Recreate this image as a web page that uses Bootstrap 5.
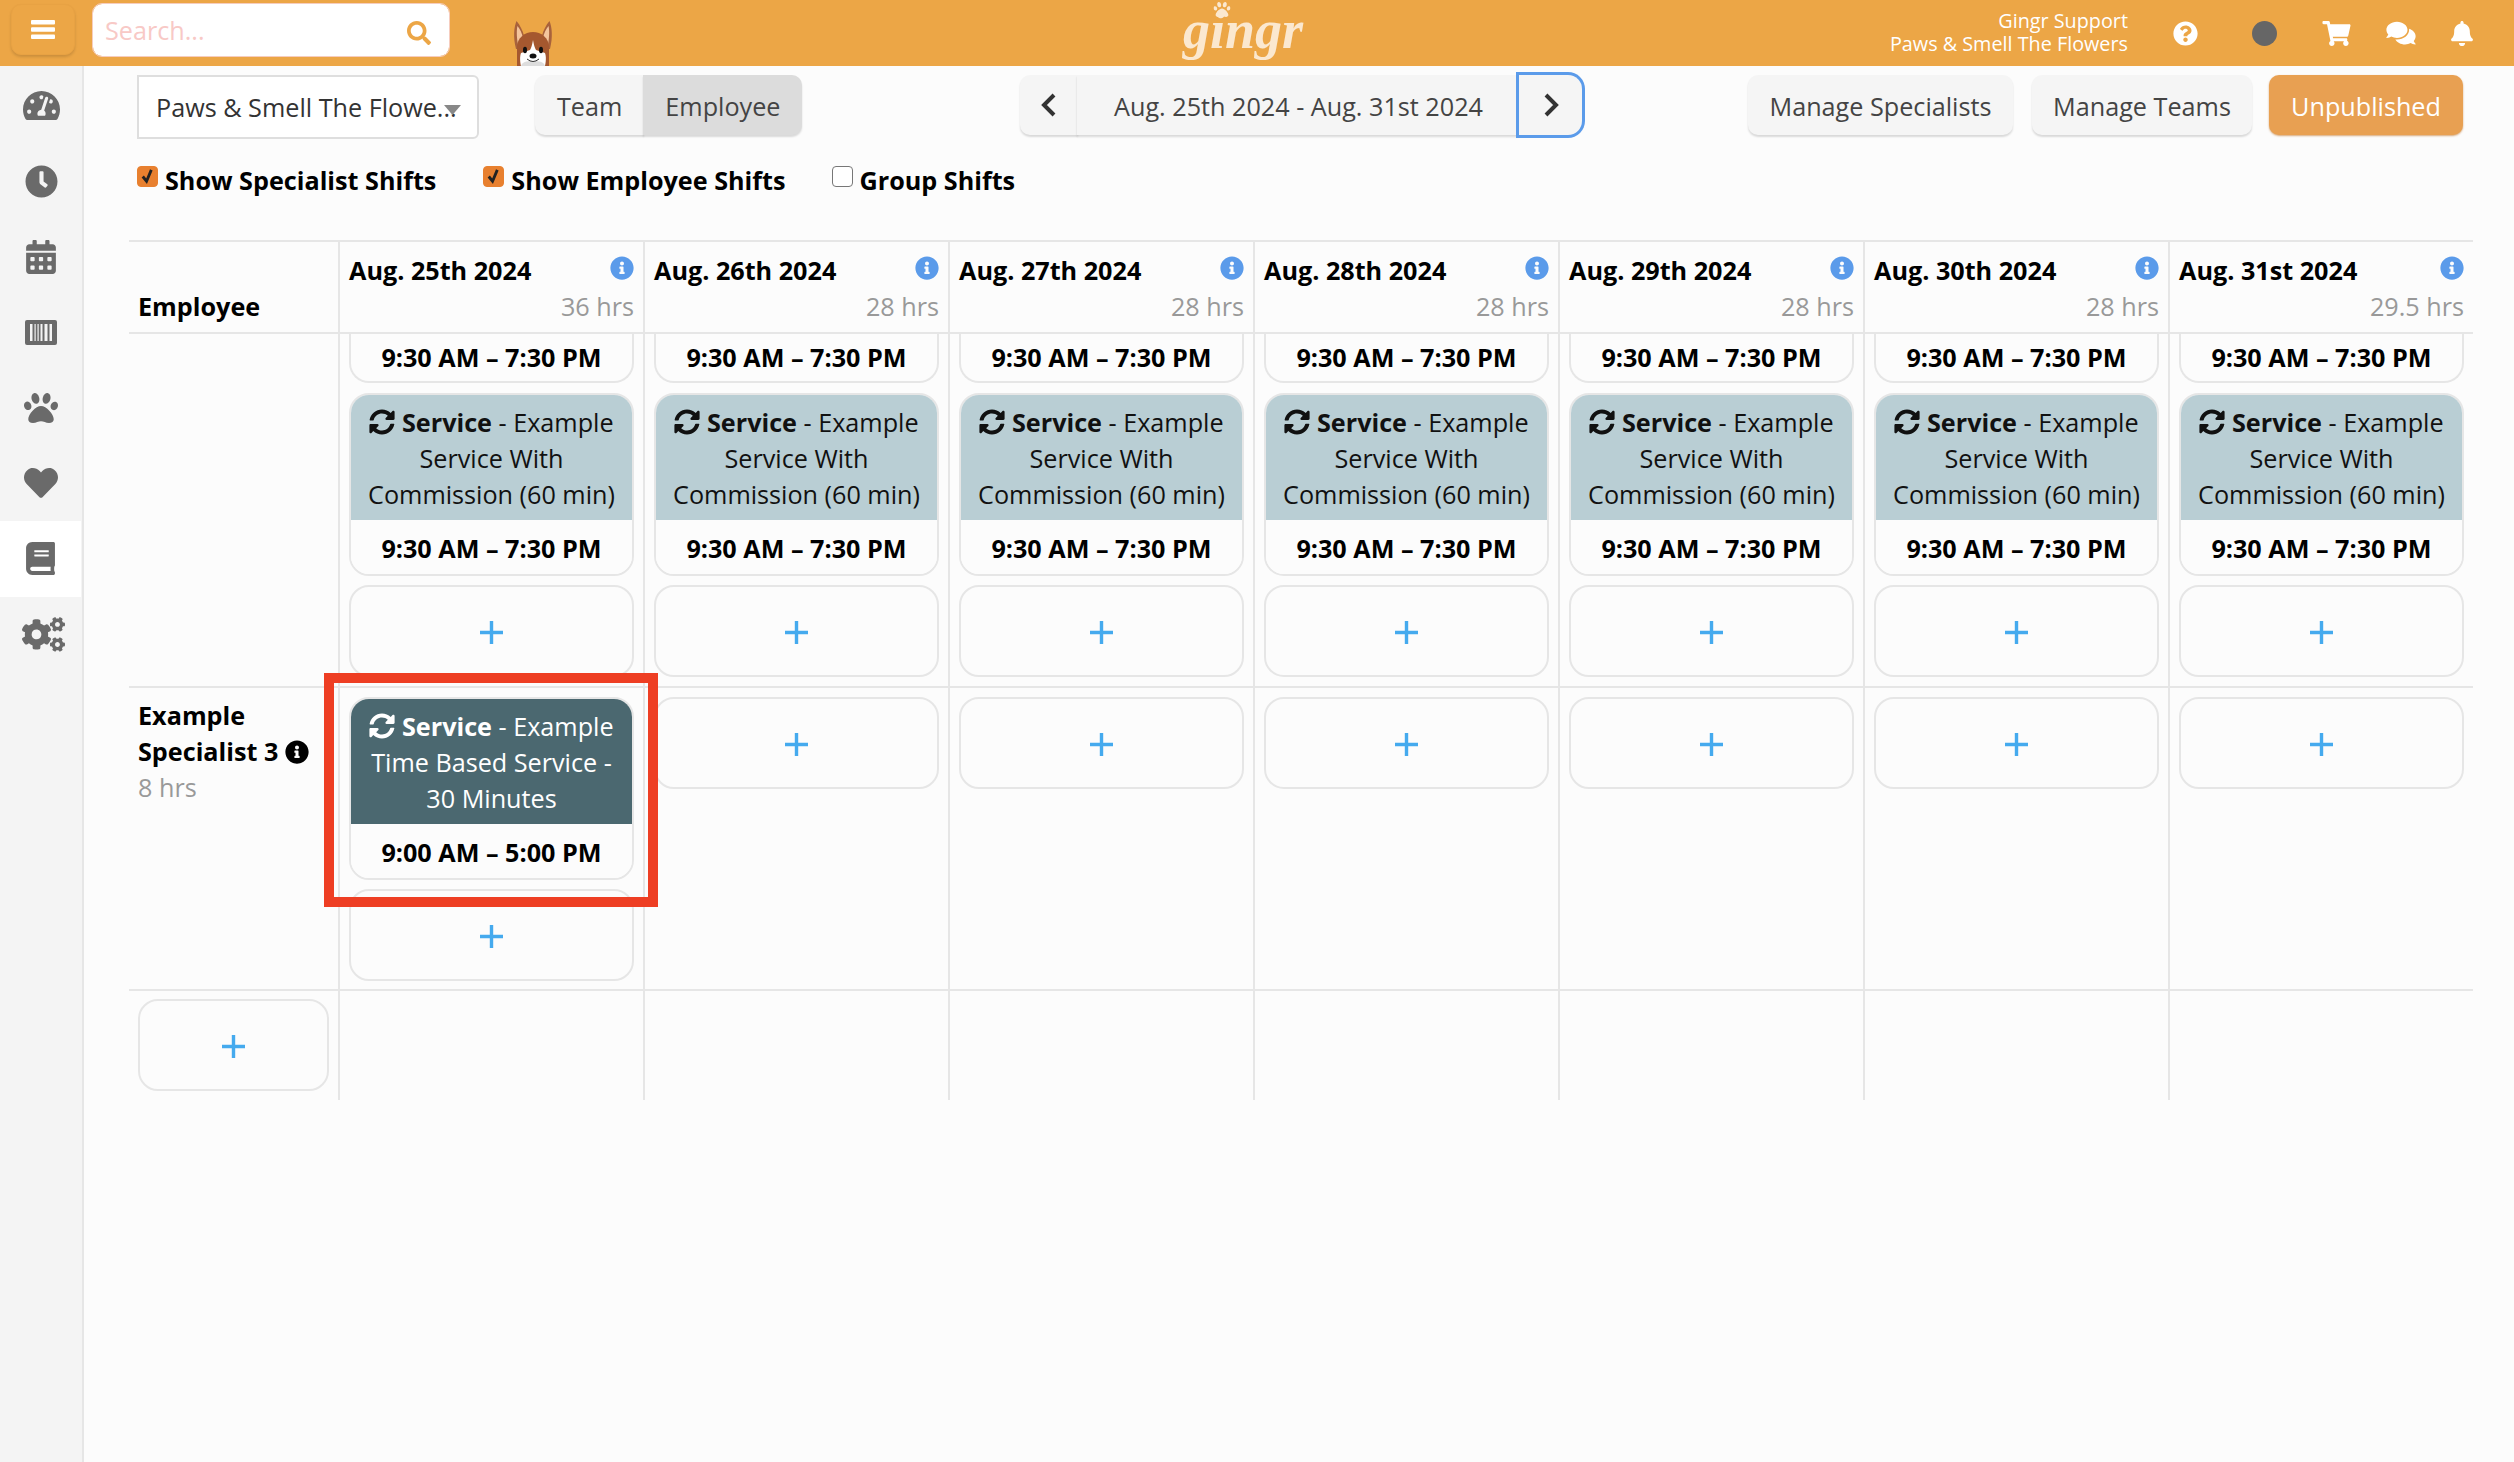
<!DOCTYPE html>
<html lang="en">
<head>
<meta charset="utf-8">
<title>Gingr Schedule</title>
<link href="https://cdn.jsdelivr.net/npm/bootstrap@5.3.0/dist/css/bootstrap.min.css" rel="stylesheet">
<style>
html,body{height:100%}
body{font-family:"Open Sans","Liberation Sans",sans-serif;font-size:25.2px;line-height:36px;background:#fcfcfc;color:#000;overflow:hidden}
.ico{fill:currentColor;display:block}
.ico-in{fill:currentColor;display:inline-block;vertical-align:-3px}
.topbar{height:66px;background:#eca646;padding:0 41px 0 11px;flex-wrap:nowrap;align-items:stretch;justify-content:flex-start}
.burger{width:64px;height:51px;margin-top:4px;border:1px solid #e8a243;border-radius:10px;background:#eca646;box-shadow:0 2px 3px rgba(0,0,0,.14);padding:0;color:#fff}
.burger svg{margin:auto}
.searchwrap{width:358px;height:54px;margin:3px 0 0 17px}
.searchwrap .form-control{height:54px;border:1px solid #f6cdbf;border-radius:10px;padding:0 12px;font-size:25.2px;box-shadow:none}
.searchwrap .form-control::placeholder{color:#f8c9c6;opacity:1}
.searchico{position:absolute;right:19px;top:18px;color:#eca646}
.dog{margin:21px 0 0 63px;align-self:flex-start}
.logo{margin:0 0 0 628px;width:122px;position:relative;color:#fbe8cf;flex:none}
.logo-word{font-family:"Liberation Serif",serif;font-weight:700;font-style:italic;font-size:54px;line-height:1;display:block;margin-top:3px;padding-left:2px;letter-spacing:0}
.logo-paw{position:absolute;left:32px;top:1px}
.who{font-size:19.8px;line-height:23px;color:#fff;text-align:right;margin-top:9px;white-space:nowrap}
.ticons{color:#fff;margin-left:45px;align-items:center}
.tgap-a{margin-left:54px}.tgap-b{margin-left:45px}.tgap-c{margin-left:35px}
.tdot{width:25px;height:25px;border-radius:50%;background:#666}
.sidebar{width:84px;background:#f4f4f4;border-right:2px solid #e6e6e6;padding-top:2px;flex:none;color:#6a6a6a}
.sideitem{height:75.5px;padding:0;color:#6a6a6a;display:flex;align-items:center;justify-content:center}
.sideitem.on{background:#fff;width:81px}
.sideitem .cogs{margin-left:4px}
.mainpane{padding:9px 41px 0 45px;min-width:0}
.toolrow{padding:0 10px 0 8px;align-items:flex-start}
.selbox{width:342px;height:64px;border:2px solid #dedede;border-radius:0 6px 6px 0;background:#fff;padding:0 17px;color:#333;white-space:nowrap;position:relative;overflow:hidden}
.selarrow{position:absolute;left:305px;top:28px}
.grybtn{background:#f5f5f5;color:#444;border:0;height:60px;font-size:25.2px;line-height:36px;padding:1px 22px 0;border-radius:10px;box-shadow:0 2px 2px rgba(0,0,0,.14)}
.grybtn:hover{background:#f5f5f5;color:#444}
.grybtn.picked,.grybtn.picked:hover{background:#dcdcdc;color:#444}
.teamgrp{margin-left:56px;width:266px}
.teamgrp .grybtn:first-child{flex:0 0 107px}
.teamgrp .grybtn:last-child{flex:0 0 159px}
.dategrp{margin-left:219px;width:564px}
.dategrp .grybtn:nth-child(1){flex:0 0 58px;padding:0;border-right:1px solid #eee}
.dategrp .grybtn:nth-child(2){flex:0 0 443px;padding:1px 0 0;color:#444;border-radius:0}
.dategrp .grybtn:nth-child(3){flex:0 0 63px;padding:0;box-shadow:0 0 0 3px #5b9bea;border-radius:0 14px 14px 0;margin-left:3px;position:relative;z-index:2}
.dategrp svg{margin:auto}
.btn-ms{width:265px;padding-left:0;padding-right:0}
.btn-mt{width:220px;padding-left:0;padding-right:0;margin-left:19px}
.btn-pub,.btn-pub:hover{background:#e8a052;color:#fff;height:60px;border:0;font-size:25.2px;line-height:36px;padding:1px 0 0;border-radius:10px;box-shadow:0 1px 2px rgba(190,110,30,.6);margin-left:17px;width:194px}
.checkrow{margin:23px 0 42px;padding-left:8px;font-weight:700;height:36px;align-items:center}
.chk{display:flex;align-items:center;margin:0}
.chk .form-check-input{width:21px;height:21px;margin:0 7px 8px 0;border:1.5px solid #777;border-radius:4px;background-color:#fff;box-shadow:none;flex:none}
.chk .form-check-input:checked{background-color:#e8802f;border-color:#e8802f;background-image:url("data:image/svg+xml,%3csvg xmlns='http://www.w3.org/2000/svg' viewBox='0 0 20 20'%3e%3cpath fill='none' stroke='%23222' stroke-width='3' d='M5 10l4 5 5-12'/%3e%3c/svg%3e")}
.chk-b{margin-left:47px}.chk-c{margin-left:46px}
.sched{table-layout:fixed;width:2344px;border-collapse:separate;border-spacing:0;margin:0}
.sched th,.sched td{vertical-align:top;padding:0 9px;border-left:2px solid #e6e6e6;border-bottom:2px solid #e6e6e6;background:transparent}
.sched th:first-child,.sched td:first-child{border-left:0}
.sched thead th{border-top:2px solid #e6e6e6;height:94px;padding-top:10px}
.sched thead th:first-child{vertical-align:bottom;padding-bottom:8px}
.sched tbody tr:last-child td{border-bottom:0;height:109px}
.sched tbody tr:nth-child(1) td{height:354px}
.sched tbody tr:nth-child(2) td{height:303px;padding-top:9px}
.sched tbody tr:nth-child(3) td{padding-top:8px}
.cnr{position:relative}
.infoblue{color:#5b9bea}
.hrs{color:#999;font-weight:400;text-align:right}
.hrs-left{text-align:left}
.shift{border:2px solid #e6e6e6;border-radius:20px;overflow:hidden;background:#fcfcfc;margin-bottom:9px;text-align:center;--bs-card-bg:#fcfcfc}
.shift.cutoff{border-top:0;border-radius:0 0 20px 20px;height:49px;padding-top:5px;font-weight:700;margin-bottom:10px}
.shift-top{padding:9px 10px 8px;background:#b9ced4;color:#111;border:0;flex:none}
.shift-top.dark{background:#4b6870;color:#fff}
.shift-foot{padding:10px 0 8px;background:#fcfcfc;border:0;font-weight:700;border-radius:0}
.addbox{height:92px;border:2px solid #e6e6e6;border-radius:20px;display:flex;align-items:center;justify-content:center;color:#45aaee;background:transparent;margin:0;padding:0}
.addbox svg{margin-top:3px}
.redmark{position:absolute;left:-16px;top:-15px;width:334px;height:234px;border:10px solid #ee3e23;z-index:5;pointer-events:none}
</style>
</head>
<body class="d-flex flex-column">
<svg width="0" height="0" class="position-absolute">
<defs>
<symbol id="i-sync" viewBox="0 0 512 512"><path d="M370.72 133.28C339.458 104.008 298.888 87.962 255.848 88c-77.458.068-144.328 53.178-162.791 126.85-1.344 5.363-6.122 9.15-11.651 9.15H24.103c-7.498 0-13.194-6.807-11.807-14.176C33.933 94.924 134.813 8 256 8c66.448 0 126.791 26.136 171.315 68.685L463.03 40.97C478.149 25.851 504 36.559 504 57.941V192c0 13.255-10.745 24-24 24H345.941c-21.382 0-32.09-25.851-16.971-40.971l41.75-41.749zM32 296h134.059c21.382 0 32.09 25.851 16.971 40.971l-41.75 41.75c31.262 29.273 71.835 45.319 114.876 45.28 77.418-.07 144.315-53.144 162.787-126.849 1.344-5.363 6.122-9.15 11.651-9.15h57.304c7.498 0 13.194 6.807 11.807 14.176C478.067 417.076 377.187 504 256 504c-66.448 0-126.791-26.136-171.315-68.685L48.97 471.03C33.851 486.149 8 475.441 8 454.059V320c0-13.255 10.745-24 24-24z"/></symbol>
<symbol id="i-info" viewBox="0 0 512 512"><path d="M256 8C119.043 8 8 119.083 8 256c0 136.997 111.043 248 248 248s248-111.003 248-248C504 119.083 392.957 8 256 8zm0 110c23.196 0 42 18.804 42 42s-18.804 42-42 42-42-18.804-42-42 18.804-42 42-42zm56 254c0 6.627-5.373 12-12 12h-88c-6.627 0-12-5.373-12-12v-24c0-6.627 5.373-12 12-12h12v-64h-12c-6.627 0-12-5.373-12-12v-24c0-6.627 5.373-12 12-12h64c6.627 0 12 5.373 12 12v100h12c6.627 0 12 5.373 12 12v24z"/></symbol>
<symbol id="i-paw" viewBox="0 0 512 512"><path d="M256 224c-79.41 0-192 122.76-192 200.25 0 34.9 26.81 55.75 71.74 55.75 48.84 0 81.09-25.08 120.26-25.08 39.51 0 71.85 25.08 120.26 25.08 44.93 0 71.74-20.85 71.74-55.75C448 346.76 335.41 224 256 224zm-147.28-12.61c-10.4-34.65-42.44-57.09-71.56-50.13-29.12 6.96-44.29 40.69-33.89 75.34 10.4 34.65 42.44 57.09 71.56 50.13 29.12-6.96 44.29-40.69 33.89-75.34zm84.72-20.78c30.94-8.14 46.42-49.94 34.58-93.36s-46.52-72.01-77.46-63.87-46.42 49.94-34.58 93.36c11.84 43.42 46.52 72.02 77.46 63.87zm281.39-29.34c-29.12-6.96-61.15 15.48-71.56 50.13-10.4 34.65 4.77 68.38 33.89 75.34 29.12 6.96 61.15-15.48 71.56-50.13 10.4-34.65-4.77-68.38-33.89-75.34zm-156.27 29.34c30.94 8.14 65.62-20.45 77.46-63.87 11.84-43.42-3.64-85.21-34.58-93.36s-65.62 20.45-77.46 63.87c-11.84 43.42 3.64 85.22 34.58 93.36z"/></symbol>
<symbol id="i-plus" viewBox="0 0 23 23"><path d="M11.5 0v23M0 11.5h23" fill="none" stroke="currentColor" stroke-width="3.4"/></symbol>
</defs>
</svg>

<nav class="navbar topbar d-flex">
  <button class="burger d-flex" type="button" aria-label="Menu">
    <svg width="24" height="19" viewBox="0 0 24 19" class="ico"><rect width="24" height="4.5" rx="1"/><rect y="7.2" width="24" height="4.5" rx="1"/><rect y="14.4" width="24" height="4.5" rx="1"/></svg>
  </button>
  <div class="searchwrap position-relative">
    <input class="form-control" type="text" placeholder="Search...">
    <svg class="ico searchico" width="24" height="24" viewBox="0 0 512 512"><path d="M505 442.7L405.3 343c-4.5-4.5-10.6-7-17-7H372c27.6-35.3 44-79.7 44-128C416 93.1 322.9 0 208 0S0 93.1 0 208s93.1 208 208 208c48.3 0 92.7-16.4 128-44v16.3c0 6.4 2.5 12.5 7 17l99.7 99.7c9.4 9.4 24.6 9.4 33.9 0l28.3-28.3c9.4-9.4 9.4-24.6.1-34zM208 336c-70.7 0-128-57.2-128-128 0-70.7 57.2-128 128-128 70.7 0 128 57.2 128 128 0 70.7-57.2 128-128 128z"/></svg>
  </div>
  <svg class="dog" width="40" height="45" viewBox="0 0 40 45">
    <path d="M3 28C0 16 1 6 3.500 0 7 4 10 10 11 15L29 15C30 10 33 4 36.500 0 39 6 40 16 37 28Z" fill="#a8623c"/>
    <path d="M5 24C3.500 15 3.500 9 4.500 5 7 8 9 12 10 17ZM35 24C36.500 15 36.500 9 35.500 5 33 8 31 12 30 17Z" fill="#f4c59c"/>
    <path d="M4 45V26C4 17 12 11 20 11S36 17 36 26V45Z" fill="#a5582f"/>
    <path d="M20 19C21 25 22 27 23 29L32 32C34 37 32 45 32 45H8S6 37 8 32L17 29C18 27 19 25 20 19Z" fill="#fff"/>
    <path d="M8 45C9 41 13 40 20 40S31 41 32 45Z" fill="#ddd"/>
    <ellipse cx="12" cy="29" rx="2" ry="3.200" fill="#111"/><ellipse cx="28" cy="29" rx="2" ry="3.200" fill="#111"/>
    <ellipse cx="20" cy="35" rx="3.500" ry="2.500" fill="#111"/>
    <path d="M14 38Q20 43 26 38" stroke="#333" stroke-width="1" fill="none"/>
  </svg>
  <div class="logo">
    <svg class="ico logo-paw" width="18" height="17" viewBox="0 0 512 512"><use href="#i-paw"/></svg>
    <span class="logo-word">gingr</span>
  </div>
  <div class="who ms-auto">Gingr Support<br>Paws &amp; Smell The Flowers</div>
  <div class="d-flex ticons">
    <svg class="ico" width="25" height="25" viewBox="0 0 512 512"><path d="M504 256c0 136.997-111.043 248-248 248S8 392.997 8 256C8 119.083 119.043 8 256 8s248 111.083 248 248zM262.655 90c-54.497 0-89.255 22.957-116.549 63.758-3.536 5.286-2.353 12.415 2.715 16.258l34.699 26.31c5.205 3.947 12.621 3.008 16.665-2.122 17.864-22.658 30.113-35.797 57.303-35.797 20.429 0 45.698 13.148 45.698 32.958 0 14.976-12.363 22.667-32.534 33.976C247.128 238.528 216 254.941 216 296v4c0 6.627 5.373 12 12 12h56c6.627 0 12-5.373 12-12v-1.333c0-28.462 83.186-29.647 83.186-106.667 0-58.002-60.165-102-116.531-102zM256 338c-25.365 0-46 20.635-46 46 0 25.364 20.635 46 46 46s46-20.636 46-46c0-25.365-20.635-46-46-46z"/></svg>
    <div class="tdot tgap-a"></div>
    <svg class="ico tgap-b" width="29" height="25" viewBox="0 0 576 512"><path d="M528.12 301.319l47.273-208C578.806 78.301 567.391 64 551.99 64H159.208l-9.166-44.81C147.758 8.021 137.93 0 126.529 0H24C10.745 0 0 10.745 0 24v16c0 13.255 10.745 24 24 24h69.883l70.248 343.435C147.325 417.1 136 435.222 136 456c0 30.928 25.072 56 56 56s56-25.072 56-56c0-15.674-6.447-29.835-16.824-40h209.647C430.447 426.165 424 440.326 424 456c0 30.928 25.072 56 56 56s56-25.072 56-56c0-22.172-12.888-41.332-31.579-50.405l5.517-24.276c3.413-15.018-8.002-29.319-23.403-29.319H218.117l-6.545-32h293.145c11.206 0 20.92-7.754 23.403-18.681z"/></svg>
    <svg class="ico tgap-c" width="30" height="26" viewBox="0 0 576 512"><path d="M416 192c0-88.400-93.100-160-208-160S0 103.600 0 192c0 34.300 14.100 65.900 38 92-13.400 30.200-35.500 54.200-35.800 54.500-2.200 2.300-2.800 5.700-1.500 8.700S4.800 352 8 352c36.600 0 66.900-12.300 88.700-25 32.200 15.700 70.300 25 111.300 25 114.900 0 208-71.600 208-160zm122 220c23.900-26 38-57.700 38-92 0-66.900-53.500-124.200-129.300-148.100.9 6.600 1.300 13.300 1.300 20.100 0 105.900-107.700 192-240 192-10.800 0-21.300-.8-31.700-1.900C207.800 439.600 281.800 480 368 480c41 0 79.100-9.200 111.300-25 21.800 12.700 52.100 25 88.700 25 3.200 0 6.100-1.900 7.300-4.800 1.300-2.900.7-6.300-1.500-8.700-.3-.3-22.400-24.200-35.800-54.500z"/></svg>
    <svg class="ico tgap-c" width="22" height="25" viewBox="0 0 448 512"><path d="M224 512c35.320 0 63.970-28.650 63.970-64H160.030c0 35.350 28.650 64 63.970 64zm215.390-149.710c-19.320-20.760-55.470-51.990-55.470-154.290 0-77.700-54.480-139.900-127.940-155.160V32c0-17.670-14.320-32-31.980-32s-31.980 14.330-31.980 32v20.840C118.560 68.100 64.080 130.300 64.080 208c0 102.300-36.150 133.530-55.470 154.290-6 6.450-8.660 14.160-8.610 21.710.11 16.400 12.980 32 32.100 32h383.800c19.120 0 32-15.600 32.100-32 .05-7.550-2.610-15.270-8.610-21.710z"/></svg>
  </div>
</nav>

<div class="d-flex flex-grow-1" style="min-height:0">
  <aside class="sidebar nav flex-column flex-nowrap">
    <a class="sideitem nav-link" href="#" aria-label="Dashboard"><svg class="ico" width="37" height="33" viewBox="0 0 576 512"><path d="M288 32C128.940 32 0 160.940 0 320c0 52.800 14.250 102.260 39.060 144.800 5.610 9.620 16.300 15.200 27.440 15.200h443c11.140 0 21.830-5.580 27.440-15.200C561.750 422.260 576 372.800 576 320c0-159.060-128.940-288-288-288zm0 64c14.710 0 26.580 10.130 30.320 23.650-1.110 2.260-2.640 4.230-3.450 6.670l-9.220 27.670c-5.130 3.490-10.970 6.010-17.640 6.010-17.670 0-32-14.330-32-32S270.330 96 288 96zM96 384c-17.670 0-32-14.330-32-32s14.330-32 32-32 32 14.330 32 32-14.330 32-32 32zm48-160c-17.670 0-32-14.330-32-32s14.330-32 32-32 32 14.330 32 32-14.330 32-32 32zm246.770-72.410l-61.330 184C343.130 347.330 352 364.540 352 384c0 11.720-3.380 22.550-8.880 32H232.880c-5.500-9.450-8.880-20.280-8.880-32 0-33.940 26.500-61.430 59.900-63.590l61.340-184.010c4.170-12.560 17.730-19.450 30.360-15.170 12.570 4.190 19.350 17.790 15.170 30.360zm14.660 57.200l15.520-46.550c3.470-1.290 7.130-2.230 11.050-2.230 17.670 0 32 14.330 32 32s-14.330 32-32 32c-11.380-.01-20.890-6.280-26.570-15.220zM480 384c-17.670 0-32-14.330-32-32s14.330-32 32-32 32 14.330 32 32-14.330 32-32 32z"/></svg></a>
    <a class="sideitem nav-link" href="#" aria-label="Clock"><svg class="ico" width="33" height="33" viewBox="0 0 512 512"><path d="M256,8C119,8,8,119,8,256S119,504,256,504,504,393,504,256,393,8,256,8Zm92.490,313h0l-20,25a16,16,0,0,1-22.490,2.500h0l-67-49.720a40,40,0,0,1-15-31.230V112a16,16,0,0,1,16-16h32a16,16,0,0,1,16,16V256l58,42.500A16,16,0,0,1,348.490,321Z"/></svg></a>
    <a class="sideitem nav-link" href="#" aria-label="Calendar"><svg class="ico" width="30" height="34" viewBox="0 0 448 512"><path d="M0 464c0 26.500 21.500 48 48 48h352c26.500 0 48-21.500 48-48V192H0v272zm320-196c0-6.600 5.400-12 12-12h40c6.600 0 12 5.400 12 12v40c0 6.600-5.400 12-12 12h-40c-6.600 0-12-5.400-12-12v-40zm0 128c0-6.600 5.400-12 12-12h40c6.600 0 12 5.400 12 12v40c0 6.600-5.400 12-12 12h-40c-6.600 0-12-5.400-12-12v-40zM192 268c0-6.600 5.400-12 12-12h40c6.600 0 12 5.400 12 12v40c0 6.600-5.400 12-12 12h-40c-6.600 0-12-5.400-12-12v-40zm0 128c0-6.600 5.400-12 12-12h40c6.600 0 12 5.400 12 12v40c0 6.600-5.400 12-12 12h-40c-6.600 0-12-5.400-12-12v-40zM64 268c0-6.600 5.400-12 12-12h40c6.600 0 12 5.400 12 12v40c0 6.600-5.400 12-12 12H76c-6.600 0-12-5.400-12-12v-40zm0 128c0-6.600 5.400-12 12-12h40c6.600 0 12 5.400 12 12v40c0 6.600-5.400 12-12 12H76c-6.600 0-12-5.400-12-12v-40zM400 64h-48V16c0-8.800-7.200-16-16-16h-32c-8.800 0-16 7.200-16 16v48H160V16c0-8.800-7.200-16-16-16h-32c-8.800 0-16 7.200-16 16v48H48C21.500 64 0 85.500 0 112v48h448v-48c0-26.500-21.500-48-48-48z"/></svg></a>
    <a class="sideitem nav-link" href="#" aria-label="Barcode"><svg class="ico" width="32" height="25" viewBox="0 0 32 25"><path fill-rule="evenodd" d="M2 0h28a2 2 0 0 1 2 2v21a2 2 0 0 1-2 2H2a2 2 0 0 1-2-2V2a2 2 0 0 1 2-2zM5 4v17h2.500V4zM9.500 4v17h1.200V4zM12.500 4v17h1.200V4zM15.500 4v17h2V4zM19.500 4v17h3V4zM24.500 4v17h2.500V4z"/></svg></a>
    <a class="sideitem nav-link" href="#" aria-label="Pets"><svg class="ico" width="34" height="34" viewBox="0 0 512 512"><use href="#i-paw"/></svg></a>
    <a class="sideitem nav-link" href="#" aria-label="Favorites"><svg class="ico" width="34" height="34" viewBox="0 0 512 512"><path d="M462.300 62.600C407.500 15.900 326 24.300 275.700 76.200L256 96.500l-19.700-20.300C186.100 24.300 104.500 15.900 49.700 62.600c-62.800 53.600-66.100 149.800-9.900 207.900l193.500 199.800c12.500 12.900 32.800 12.900 45.300 0l193.500-199.800c56.300-58.100 53-154.300-9.800-207.900z"/></svg></a>
    <a class="sideitem nav-link on" href="#" aria-label="Book"><svg class="ico" width="29" height="33" viewBox="0 0 448 512"><path d="M448 360V24c0-13.300-10.700-24-24-24H96C43 0 0 43 0 96v320c0 53 43 96 96 96h328c13.300 0 24-10.700 24-24v-16c0-7.500-3.500-14.300-8.900-18.700-4.200-15.400-4.200-59.300 0-74.700 5.400-4.300 8.900-11.100 8.900-18.600zM128 134c0-3.300 2.700-6 6-6h212c3.300 0 6 2.700 6 6v20c0 3.300-2.700 6-6 6H134c-3.300 0-6-2.700-6-6v-20zm0 64c0-3.300 2.700-6 6-6h212c3.300 0 6 2.700 6 6v20c0 3.300-2.700 6-6 6H134c-3.300 0-6-2.700-6-6v-20zm253.400 250H96c-17.700 0-32-14.300-32-32 0-17.600 14.400-32 32-32h285.400c-1.900 17.100-1.900 46.900 0 64z"/></svg></a>
    <a class="sideitem nav-link" href="#" aria-label="Settings"><svg class="ico cogs" width="43" height="35" viewBox="0 0 640 512"><path d="M512.100 191l-8.200 14.300c-3 5.300-9.400 7.500-15.100 5.400-11.800-4.400-22.600-10.700-32.100-18.600-4.600-3.800-5.800-10.500-2.800-15.700l8.200-14.300c-6.900-8-12.300-17.300-15.900-27.400h-16.500c-6 0-11.200-4.300-12.200-10.300-2-12-2.100-24.600 0-37.100 1-6 6.200-10.400 12.200-10.400h16.500c3.600-10.100 9-19.400 15.900-27.400l-8.200-14.300c-3-5.200-1.900-11.900 2.800-15.700 9.500-7.900 20.400-14.200 32.100-18.600 5.700-2.100 12.100.1 15.100 5.400l8.200 14.300c10.500-1.900 21.200-1.900 31.700 0L552 6.300c3-5.300 9.400-7.500 15.100-5.400 11.800 4.400 22.600 10.700 32.100 18.600 4.600 3.800 5.800 10.500 2.800 15.700l-8.200 14.300c6.900 8 12.300 17.300 15.900 27.400h16.500c6 0 11.200 4.300 12.200 10.300 2 12 2.100 24.600 0 37.100-1 6-6.200 10.400-12.200 10.400h-16.500c-3.600 10.100-9 19.400-15.900 27.400l8.200 14.300c3 5.200 1.900 11.900-2.800 15.700-9.500 7.900-20.400 14.200-32.100 18.600-5.700 2.100-12.100-.1-15.100-5.400l-8.200-14.300c-10.400 1.900-21.200 1.900-31.700 0zm-10.500-58.800c38.500 29.600 82.400-14.300 52.800-52.800-38.500-29.700-82.400 14.300-52.800 52.800zM386.300 286.100l33.700 16.800c10.100 5.800 14.500 18.100 10.500 29.100-8.900 24.200-26.400 46.400-42.600 65.800-7.400 8.900-20.200 11.100-30.300 5.300l-29.100-16.800c-16 13.700-34.600 24.600-54.900 31.700v33.600c0 11.600-8.300 21.600-19.700 23.600-24.600 4.200-50.400 4.400-75.900 0-11.500-2-20-11.900-20-23.600V418c-20.300-7.200-38.900-18-54.900-31.700L74 403c-10 5.800-22.900 3.600-30.300-5.300-16.200-19.400-33.300-41.600-42.200-65.700-4-10.900.4-23.200 10.500-29.100l33.300-16.800c-3.900-20.900-3.900-42.400 0-63.400L12 205.800c-10.100-5.800-14.600-18.100-10.500-29 8.900-24.200 26-46.400 42.200-65.800 7.400-8.900 20.200-11.100 30.300-5.300l29.100 16.800c16-13.700 34.600-24.600 54.900-31.700V57.100c0-11.500 8.200-21.500 19.600-23.500 24.600-4.200 50.500-4.400 76-.1 11.500 2 20 11.900 20 23.600v33.600c20.300 7.200 38.900 18 54.900 31.700l29.100-16.800c10-5.800 22.900-3.600 30.300 5.300 16.200 19.400 33.200 41.600 42.100 65.800 4 10.900.1 23.200-10 29.100l-33.700 16.800c3.900 21 3.900 42.500 0 63.500zm-117.600 21.100c59.200-77-28.700-164.900-105.700-105.700-59.200 77 28.700 164.900 105.700 105.700zm243.400 182.700l-8.200 14.300c-3 5.300-9.400 7.500-15.100 5.400-11.800-4.400-22.600-10.700-32.100-18.600-4.600-3.800-5.800-10.500-2.800-15.700l8.200-14.300c-6.900-8-12.300-17.300-15.900-27.400h-16.500c-6 0-11.200-4.300-12.200-10.300-2-12-2.100-24.600 0-37.100 1-6 6.200-10.400 12.200-10.400h16.500c3.600-10.100 9-19.400 15.900-27.400l-8.200-14.300c-3-5.200-1.900-11.900 2.800-15.700 9.500-7.900 20.400-14.200 32.100-18.600 5.700-2.100 12.100.1 15.100 5.400l8.200 14.300c10.500-1.900 21.200-1.900 31.700 0l8.200-14.300c3-5.300 9.400-7.500 15.100-5.400 11.800 4.400 22.600 10.700 32.100 18.600 4.600 3.800 5.800 10.500 2.800 15.700l-8.200 14.300c6.900 8 12.300 17.300 15.900 27.400h16.500c6 0 11.200 4.300 12.200 10.300 2 12 2.100 24.600 0 37.100-1 6-6.200 10.400-12.200 10.400h-16.500c-3.600 10.100-9 19.400-15.900 27.400l8.200 14.300c3 5.200 1.900 11.900-2.800 15.700-9.500 7.900-20.400 14.200-32.100 18.600-5.700 2.100-12.100-.1-15.100-5.400l-8.200-14.300c-10.400 1.900-21.200 1.900-31.700 0zM501.600 431c38.500 29.600 82.400-14.300 52.800-52.800-38.500-29.600-82.400 14.300-52.800 52.800z"/></svg></a>
  </aside>

  <main class="mainpane flex-grow-1">
    <div class="d-flex toolrow">
      <div class="selbox d-flex align-items-center">Paws &amp; Smell The Flowe...<svg class="selarrow" width="17" height="10" viewBox="0 0 17 10"><path d="M0 0h17L8.500 10z" fill="#888"/></svg></div>
      <div class="btn-group teamgrp" role="group">
        <button class="btn grybtn" type="button">Team</button>
        <button class="btn grybtn picked" type="button">Employee</button>
      </div>
      <div class="btn-group dategrp" role="group">
        <button class="btn grybtn d-flex" type="button" aria-label="Previous week"><svg width="16" height="24" viewBox="0 0 16 24"><path d="M13 2L3 12l10 10" fill="none" stroke="#333" stroke-width="4"/></svg></button>
        <button class="btn grybtn" type="button">Aug. 25th 2024 - Aug. 31st 2024</button>
        <button class="btn grybtn d-flex" type="button" aria-label="Next week"><svg width="16" height="24" viewBox="0 0 16 24"><path d="M3 2l10 10L3 22" fill="none" stroke="#333" stroke-width="4"/></svg></button>
      </div>
      <div class="ms-auto d-flex">
        <button class="btn grybtn btn-ms" type="button">Manage Specialists</button>
        <button class="btn grybtn btn-mt" type="button">Manage Teams</button>
        <button class="btn btn-pub" type="button">Unpublished</button>
      </div>
    </div>

    <div class="d-flex checkrow">
      <label class="chk"><input class="form-check-input" type="checkbox" checked>Show Specialist Shifts</label>
      <label class="chk chk-b"><input class="form-check-input" type="checkbox" checked>Show Employee Shifts</label>
      <label class="chk chk-c"><input class="form-check-input" type="checkbox">Group Shifts</label>
    </div>

    <table class="sched">
      <colgroup><col style="width:209px"><col span="7" style="width:305px"></colgroup>
      <thead>
        <tr>
          <th>Employee</th>
          <th><div class="d-flex justify-content-between"><span>Aug. 25th 2024</span><svg class="ico infoblue mt-1" width="24" height="24"><use href="#i-info"/></svg></div><div class="hrs">36 hrs</div></th>
          <th><div class="d-flex justify-content-between"><span>Aug. 26th 2024</span><svg class="ico infoblue mt-1" width="24" height="24"><use href="#i-info"/></svg></div><div class="hrs">28 hrs</div></th>
          <th><div class="d-flex justify-content-between"><span>Aug. 27th 2024</span><svg class="ico infoblue mt-1" width="24" height="24"><use href="#i-info"/></svg></div><div class="hrs">28 hrs</div></th>
          <th><div class="d-flex justify-content-between"><span>Aug. 28th 2024</span><svg class="ico infoblue mt-1" width="24" height="24"><use href="#i-info"/></svg></div><div class="hrs">28 hrs</div></th>
          <th><div class="d-flex justify-content-between"><span>Aug. 29th 2024</span><svg class="ico infoblue mt-1" width="24" height="24"><use href="#i-info"/></svg></div><div class="hrs">28 hrs</div></th>
          <th><div class="d-flex justify-content-between"><span>Aug. 30th 2024</span><svg class="ico infoblue mt-1" width="24" height="24"><use href="#i-info"/></svg></div><div class="hrs">28 hrs</div></th>
          <th><div class="d-flex justify-content-between"><span>Aug. 31st 2024</span><svg class="ico infoblue mt-1" width="24" height="24"><use href="#i-info"/></svg></div><div class="hrs">29.5 hrs</div></th>
        </tr>
      </thead>
      <tbody>
        <tr>
          <td></td>
          <td><div class="shift cutoff">9:30 AM – 7:30 PM</div><div class="card shift"><div class="card-body shift-top"><svg class="ico-in" width="26" height="26"><use href="#i-sync"/></svg> <b>Service</b> - Example<br>Service With<br>Commission (60 min)</div><div class="card-footer shift-foot">9:30 AM – 7:30 PM</div></div><div class="addbox"><svg width="23" height="23"><use href="#i-plus"/></svg></div></td>
          <td><div class="shift cutoff">9:30 AM – 7:30 PM</div><div class="card shift"><div class="card-body shift-top"><svg class="ico-in" width="26" height="26"><use href="#i-sync"/></svg> <b>Service</b> - Example<br>Service With<br>Commission (60 min)</div><div class="card-footer shift-foot">9:30 AM – 7:30 PM</div></div><div class="addbox"><svg width="23" height="23"><use href="#i-plus"/></svg></div></td>
          <td><div class="shift cutoff">9:30 AM – 7:30 PM</div><div class="card shift"><div class="card-body shift-top"><svg class="ico-in" width="26" height="26"><use href="#i-sync"/></svg> <b>Service</b> - Example<br>Service With<br>Commission (60 min)</div><div class="card-footer shift-foot">9:30 AM – 7:30 PM</div></div><div class="addbox"><svg width="23" height="23"><use href="#i-plus"/></svg></div></td>
          <td><div class="shift cutoff">9:30 AM – 7:30 PM</div><div class="card shift"><div class="card-body shift-top"><svg class="ico-in" width="26" height="26"><use href="#i-sync"/></svg> <b>Service</b> - Example<br>Service With<br>Commission (60 min)</div><div class="card-footer shift-foot">9:30 AM – 7:30 PM</div></div><div class="addbox"><svg width="23" height="23"><use href="#i-plus"/></svg></div></td>
          <td><div class="shift cutoff">9:30 AM – 7:30 PM</div><div class="card shift"><div class="card-body shift-top"><svg class="ico-in" width="26" height="26"><use href="#i-sync"/></svg> <b>Service</b> - Example<br>Service With<br>Commission (60 min)</div><div class="card-footer shift-foot">9:30 AM – 7:30 PM</div></div><div class="addbox"><svg width="23" height="23"><use href="#i-plus"/></svg></div></td>
          <td><div class="shift cutoff">9:30 AM – 7:30 PM</div><div class="card shift"><div class="card-body shift-top"><svg class="ico-in" width="26" height="26"><use href="#i-sync"/></svg> <b>Service</b> - Example<br>Service With<br>Commission (60 min)</div><div class="card-footer shift-foot">9:30 AM – 7:30 PM</div></div><div class="addbox"><svg width="23" height="23"><use href="#i-plus"/></svg></div></td>
          <td><div class="shift cutoff">9:30 AM – 7:30 PM</div><div class="card shift"><div class="card-body shift-top"><svg class="ico-in" width="26" height="26"><use href="#i-sync"/></svg> <b>Service</b> - Example<br>Service With<br>Commission (60 min)</div><div class="card-footer shift-foot">9:30 AM – 7:30 PM</div></div><div class="addbox"><svg width="23" height="23"><use href="#i-plus"/></svg></div></td>
        </tr>
        <tr>
          <td><b>Example<br>Specialist 3 <svg class="ico-in" width="24" height="24"><use href="#i-info"/></svg></b><div class="hrs hrs-left">8 hrs</div></td>
          <td class="cnr"><div class="redmark"></div><div class="card shift"><div class="card-body shift-top dark"><svg class="ico-in" width="26" height="26"><use href="#i-sync"/></svg> <b>Service</b> - Example<br>Time Based Service -<br>30 Minutes</div><div class="card-footer shift-foot">9:00 AM – 5:00 PM</div></div><div class="addbox"><svg width="23" height="23"><use href="#i-plus"/></svg></div></td>
          <td><div class="addbox"><svg width="23" height="23"><use href="#i-plus"/></svg></div></td>
          <td><div class="addbox"><svg width="23" height="23"><use href="#i-plus"/></svg></div></td>
          <td><div class="addbox"><svg width="23" height="23"><use href="#i-plus"/></svg></div></td>
          <td><div class="addbox"><svg width="23" height="23"><use href="#i-plus"/></svg></div></td>
          <td><div class="addbox"><svg width="23" height="23"><use href="#i-plus"/></svg></div></td>
          <td><div class="addbox"><svg width="23" height="23"><use href="#i-plus"/></svg></div></td>
        </tr>
        <tr>
          <td><div class="addbox"><svg width="23" height="23"><use href="#i-plus"/></svg></div></td>
          <td></td><td></td><td></td><td></td><td></td><td></td><td></td>
        </tr>
      </tbody>
    </table>
  </main>
</div>
<script src="https://cdn.jsdelivr.net/npm/bootstrap@5.3.0/dist/js/bootstrap.bundle.min.js"></script>
</body>
</html>
